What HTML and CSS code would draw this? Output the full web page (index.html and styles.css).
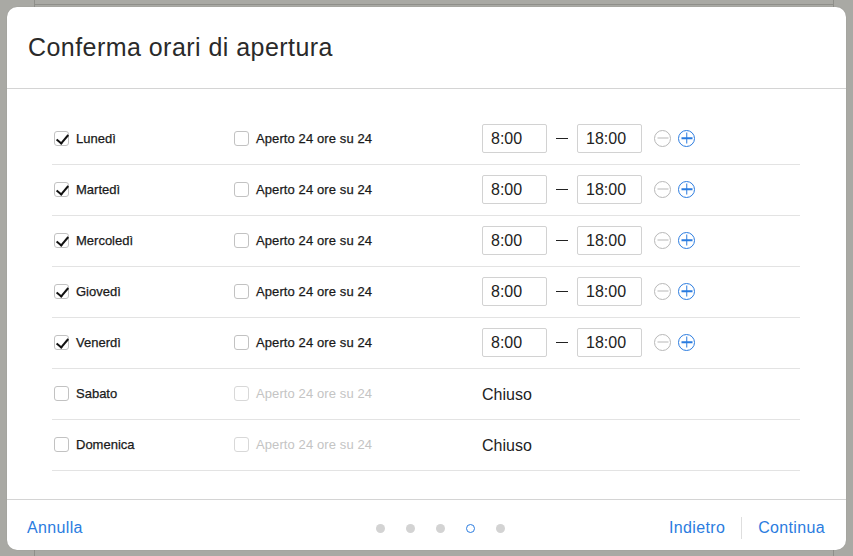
FILE: index.html
```html
<!DOCTYPE html>
<html lang="it">
<head>
<meta charset="utf-8">
<title>Conferma orari di apertura</title>
<link rel="stylesheet" href="styles.css">
</head>
<body>
<div class="backdrop">
  <div class="bg-line bg-top"></div>
  <div class="bg-line bg-left"></div>
  <div class="bg-line bg-right"></div>
</div>
<div class="modal">
  <header class="modal-head">
    <h1 class="title">Conferma orari di apertura</h1>
  </header>
  <div class="modal-body">
    <ul class="days">
      <li class="day">
        <label class="col-day"><span class="cb checked"></span><span class="day-name">Lunedì</span></label>
        <label class="col-24"><span class="cb"></span><span class="opt">Aperto 24 ore su 24</span></label>
        <div class="col-hours">
          <span class="time">8:00</span><span class="dash"></span><span class="time">18:00</span>
          <span class="ctrl minus"></span><span class="ctrl plus"></span>
        </div>
      </li>
      <li class="day">
        <label class="col-day"><span class="cb checked"></span><span class="day-name">Martedì</span></label>
        <label class="col-24"><span class="cb"></span><span class="opt">Aperto 24 ore su 24</span></label>
        <div class="col-hours">
          <span class="time">8:00</span><span class="dash"></span><span class="time">18:00</span>
          <span class="ctrl minus"></span><span class="ctrl plus"></span>
        </div>
      </li>
      <li class="day">
        <label class="col-day"><span class="cb checked"></span><span class="day-name">Mercoledì</span></label>
        <label class="col-24"><span class="cb"></span><span class="opt">Aperto 24 ore su 24</span></label>
        <div class="col-hours">
          <span class="time">8:00</span><span class="dash"></span><span class="time">18:00</span>
          <span class="ctrl minus"></span><span class="ctrl plus"></span>
        </div>
      </li>
      <li class="day">
        <label class="col-day"><span class="cb checked"></span><span class="day-name">Giovedì</span></label>
        <label class="col-24"><span class="cb"></span><span class="opt">Aperto 24 ore su 24</span></label>
        <div class="col-hours">
          <span class="time">8:00</span><span class="dash"></span><span class="time">18:00</span>
          <span class="ctrl minus"></span><span class="ctrl plus"></span>
        </div>
      </li>
      <li class="day">
        <label class="col-day"><span class="cb checked"></span><span class="day-name">Venerdì</span></label>
        <label class="col-24"><span class="cb"></span><span class="opt">Aperto 24 ore su 24</span></label>
        <div class="col-hours">
          <span class="time">8:00</span><span class="dash"></span><span class="time">18:00</span>
          <span class="ctrl minus"></span><span class="ctrl plus"></span>
        </div>
      </li>
      <li class="day">
        <label class="col-day"><span class="cb"></span><span class="day-name">Sabato</span></label>
        <label class="col-24 disabled"><span class="cb"></span><span class="opt">Aperto 24 ore su 24</span></label>
        <div class="col-hours"><span class="closed">Chiuso</span></div>
      </li>
      <li class="day">
        <label class="col-day"><span class="cb"></span><span class="day-name">Domenica</span></label>
        <label class="col-24 disabled"><span class="cb"></span><span class="opt">Aperto 24 ore su 24</span></label>
        <div class="col-hours"><span class="closed">Chiuso</span></div>
      </li>
    </ul>
  </div>
  <footer class="modal-foot">
    <a class="link">Annulla</a>
    <div class="dots">
      <span class="dot"></span><span class="dot"></span><span class="dot"></span><span class="dot current"></span><span class="dot"></span>
    </div>
    <div class="nav">
      <a class="link">Indietro</a>
      <span class="sep"></span>
      <a class="link">Continua</a>
    </div>
  </footer>
</div>
</body>
</html>
```
FILE: styles.css
```css
* { box-sizing: border-box; }
html, body { margin: 0; padding: 0; }
body {
  width: 853px;
  height: 556px;
  overflow: hidden;
  background: #a9a9a4;
  font-family: "Liberation Sans", Arial, sans-serif;
  position: relative;
  padding: 7px;
}
.backdrop { position: absolute; inset: 0; }
.bg-line { position: absolute; background: #8f8f8a; }
.bg-top { left: 35px; right: 20px; top: 4px; height: 1px; }
.bg-left { left: 34px; top: 0; bottom: 0; width: 1px; }
.bg-right { left: 833px; top: 0; bottom: 0; width: 1px; }

.modal {
  position: relative;
  width: 839px;
  height: 543px;
  background: #fff;
  border-radius: 10px;
  display: flex;
  flex-direction: column;
  box-shadow: 0 0 1px rgba(0,0,0,0.2);
}
.modal-head {
  height: 82px;
  border-bottom: 1px solid #d4d4d4;
  display: flex;
  align-items: center;
  padding-left: 21px;
  flex: none;
}
.title {
  margin: 0;
  font-size: 25px;
  font-weight: normal;
  color: #2a2a2a;
  letter-spacing: 0.45px;
}
.modal-body {
  flex: 1;
  padding: 25px 46px 0 45px;
}
.days { list-style: none; margin: 0; padding: 0; }
.day {
  height: 51px;
  border-bottom: 1px solid #e3e3e3;
  display: flex;
  align-items: center;
  padding-bottom: 2px;
}
.col-day, .col-24 {
  display: flex;
  align-items: center;
  font-size: 13px;
  color: #1a1a1a;
}
.col-day { width: 182px; padding-left: 2px; }
.col-24 { width: 248px; }
.col-day .day-name, .col-24 .opt { margin-left: 7px; -webkit-text-stroke: 0.25px #1a1a1a; }
.col-24 .opt { letter-spacing: 0.1px; }
.col-24.disabled .opt { color: #c4c4c4; -webkit-text-stroke: 0; }
.cb {
  width: 15px;
  height: 15px;
  border: 1px solid #c2c2c2;
  border-radius: 3px;
  position: relative;
  flex: none;
}
.col-24.disabled .cb { border-color: #d8d8d8; }
.cb.checked::after {
  content: "";
  position: absolute;
  left: 4px;
  top: 0px;
  width: 5px;
  height: 10px;
  border-right: 2px solid #111;
  border-bottom: 2px solid #111;
  transform: rotate(40deg);
}
.col-hours {
  display: flex;
  align-items: center;
}
.time {
  width: 65px;
  height: 29px;
  border: 1px solid #d2d2d2;
  border-radius: 2px;
  font-size: 16px;
  color: #222;
  display: flex;
  align-items: center;
  padding-left: 8px;
  padding-top: 1px;
}
.dash {
  width: 12px;
  height: 1px;
  background: #222;
  margin: 0 9px 0 9px;
}
.ctrl {
  width: 17px;
  height: 17px;
  border-radius: 50%;
  position: relative;
  margin-left: 7px;
}
.minus { border: 1px solid #b8b8b8; margin-left: 12px; }
.plus { border: 1.5px solid #2b7ce0; }
.minus::before, .plus::before, .plus::after {
  content: "";
  position: absolute;
  left: 50%;
  top: 50%;
  transform: translate(-50%, -50%);
}
.minus::before { width: 11px; height: 1px; background: #b8b8b8; }
.plus::before { width: 11px; height: 1.5px; background: #2b7ce0; }
.plus::after { width: 1.5px; height: 11px; background: #2b7ce0; }
.closed { font-size: 16px; color: #222; padding-top: 4px; }

.modal-foot {
  flex: none;
  height: 51px;
  border-top: 1px solid #d4d4d4;
  display: flex;
  align-items: center;
  justify-content: space-between;
  padding: 5px 21px 0 20px;
  position: relative;
}
.link { font-size: 16px; color: #2b7ce0; cursor: pointer; letter-spacing: 0.35px; }
.dots {
  position: absolute;
  left: 369px;
  top: 24px;
  display: flex;
  gap: 21px;
}
.dot { width: 9px; height: 9px; border-radius: 50%; background: #d3d3d3; }
.dot.current { background: #fff; border: 1.5px solid #2b7ce0; }
.nav { display: flex; align-items: center; }
.sep { width: 1px; height: 22px; background: #dedede; margin: 0 16px; }
```
